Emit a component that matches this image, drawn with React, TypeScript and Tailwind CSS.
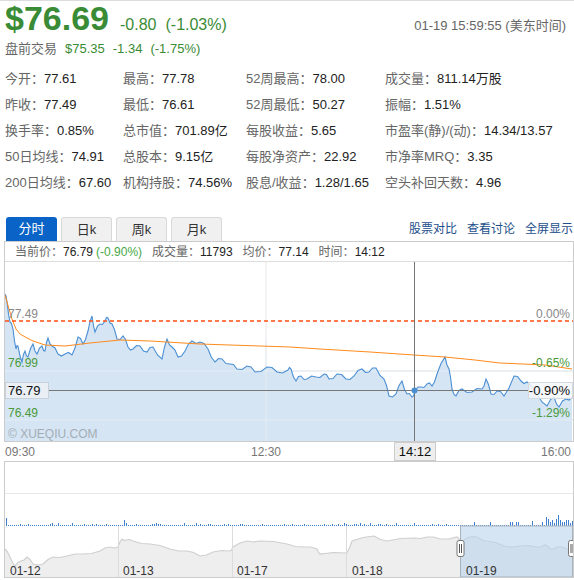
import React from 'react';

const STATS: [string, string][][] = [
  [['今开', '77.61'], ['最高', '77.78'], ['52周最高', '78.00'], ['成交量', '811.14万股']],
  [['昨收', '77.49'], ['最低', '76.61'], ['52周最低', '50.27'], ['振幅', '1.51%']],
  [['换手率', '0.85%'], ['总市值', '701.89亿'], ['每股收益', '5.65'], ['市盈率(静)/(动)', '14.34/13.57']],
  [['50日均线', '74.91'], ['总股本', '9.15亿'], ['每股净资产', '22.92'], ['市净率MRQ', '3.35']],
  [['200日均线', '67.60'], ['机构持股', '74.56%'], ['股息/收益', '1.28/1.65'], ['空头补回天数', '4.96']],
];

// traced from the intraday chart, page coordinates
const PRICE: [number, number][] = [
  [5, 295], [7, 303], [10, 323], [13, 330], [16, 350], [18, 347], [22, 363], [25, 352], [28, 358],
  [33, 345], [37, 355], [42, 347], [45, 352], [48, 339], [52, 347], [58, 355], [65, 355], [72, 356],
  [78, 338], [83, 345], [88, 332], [92, 317], [95, 333], [100, 325], [105, 322], [108, 319], [112, 325],
  [117, 340], [123, 337], [128, 348], [133, 350], [140, 347], [147, 353], [153, 348], [162, 360],
  [167, 340], [172, 348], [178, 358], [185, 352], [192, 342], [200, 343], [208, 350], [215, 363],
  [222, 360], [230, 365], [237, 370], [247, 367], [255, 373], [267, 368], [277, 373], [288, 371],
  [291, 370], [296, 382], [301, 377], [307, 380], [316, 378], [324, 375], [329, 380], [337, 375],
  [346, 380], [354, 377], [362, 370], [369, 373], [376, 369], [384, 380], [389, 397], [396, 395],
  [402, 382], [407, 395], [412, 398], [415, 392], [421, 388], [427, 385], [432, 387], [437, 375],
  [445, 358], [449, 370], [452, 390], [456, 397], [462, 390], [472, 393], [482, 390], [486, 380],
  [491, 395], [497, 392], [504, 397], [514, 377], [521, 382], [527, 383], [537, 395], [547, 407],
  [554, 398], [559, 408], [566, 400], [572, 398],
];

const AVG: [number, number][] = [
  [5, 296], [9, 310], [12, 320], [16, 330], [20, 335], [27, 339], [33, 342], [45, 346], [65, 347],
  [90, 344], [120, 341], [150, 342], [200, 345], [260, 347], [290, 348], [320, 350], [370, 353],
  [414, 356], [445, 358], [475, 361], [500, 364], [545, 366], [572, 370],
];

const NAV: [number, number][] = [
  [5, 550], [10, 558], [15, 567], [21, 562], [27, 558], [33, 565], [43, 565], [53, 558], [67, 557],
  [83, 555], [100, 552], [110, 548], [118, 548], [122, 540], [126, 541], [133, 542], [150, 545],
  [170, 550], [187, 552], [200, 557], [213, 553], [230, 552], [233, 548], [247, 542], [260, 542],
  [287, 545], [304, 548], [317, 550], [320, 555], [347, 554], [352, 542], [374, 537], [387, 542],
  [414, 539], [427, 538], [440, 540], [457, 538], [460, 542], [467, 539], [477, 538], [487, 542],
  [504, 547], [520, 547], [537, 548], [545, 546], [550, 550], [557, 548], [567, 550], [572, 547],
];

const jitter = (pts: [number, number][], amp: number) => {
  const out: [number, number][] = [];
  pts.forEach((p, i) => {
    out.push(p);
    const n = pts[i + 1];
    if (n) out.push([(p[0] + n[0]) / 2, (p[1] + n[1]) / 2 + (i % 2 ? amp : -amp)]);
  });
  return out;
};

const toLine = (pts: [number, number][]) => pts.map(([x, y]) => `${x},${y}`).join(' ');

const VOLUME = (() => {
  const bars: { x: number; h: number }[] = [];
  let seed = 7;
  for (let x = 6; x <= 572; x += 2) {
    seed = (seed * 9301 + 49297) % 233280;
    const r = seed / 233280;
    let h = r < 0.75 ? 1 : r < 0.95 ? 2 : 3;
    if (x > 545) h += Math.round(r * 7) + 1;
    else if (x > 470) h += r > 0.8 ? 2 : 0;
    bars.push({ x, h });
  }
  bars[0].h = 8;
  bars[59].h = 6;
  return bars;
})();

const PriceChart = () => {
  const line = jitter(PRICE, 2);
  return (
    <svg width={568} height={179} viewBox="5 263 568 179" className="block">
      <line x1={5} x2={573} y1={372} y2={372} stroke="#e4e4e4" />
      <line x1={5} x2={573} y1={421} y2={421} stroke="#e4e4e4" />
      <line x1={266} x2={266} y1={263} y2={442} stroke="#e8e8e8" />
      <polygon points={`5,442 ${toLine(line)} 572,442`} fill="#d5e5f3" />
      <line x1={5} x2={573} y1={372} y2={372} stroke="#e8eef5" opacity={0.8} />
      <line x1={5} x2={573} y1={421} y2={421} stroke="#e8eef5" opacity={0.8} />
      <line x1={266} x2={266} y1={340} y2={442} stroke="#e6edf4" />
      <polyline points={toLine(line)} fill="none" stroke="#4b8fd3" strokeWidth={1.1} />
      <polyline points={toLine(AVG)} fill="none" stroke="#ff8a1c" strokeWidth={1} />
      <line x1={5} x2={573} y1={322} y2={322} stroke="#ff4f10" strokeWidth={1.4} strokeDasharray="4 3" />
      <line x1={414.5} x2={414.5} y1={263} y2={442} stroke="#777" />
      <line x1={48} x2={528} y1={391.5} y2={391.5} stroke="#777" />
      <circle cx={414.5} cy={391.5} r={3} fill="#4b8fd3" />
      <g fontSize={12}>
        <text x={8} y={319} fill="#888">77.49</text>
        <text x={570} y={319} fill="#888" textAnchor="end">0.00%</text>
        <text x={8} y={368} fill="#4a9a3a">76.99</text>
        <text x={570} y={368} fill="#4a9a3a" textAnchor="end">-0.65%</text>
        <text x={8} y={418} fill="#4a9a3a">76.49</text>
        <text x={570} y={418} fill="#4a9a3a" textAnchor="end">-1.29%</text>
        <text x={8} y={439} fill="#a4adb6">© XUEQIU.COM</text>
      </g>
      <rect x={5.5} y={383.5} width={43} height={16} fill="#e9eff5" stroke="#c9d1d9" />
      <text x={8} y={396} fontSize={13} fill="#111">76.79</text>
      <rect x={528.5} y={383.5} width={44} height={16} fill="#f4f7fa" fillOpacity={0.85} stroke="#d4d9de" />
      <text x={570} y={396} fontSize={13} fill="#111" textAnchor="end">-0.90%</text>
    </svg>
  );
};

const TimeAxis = () => (
  <svg width={574} height={19} viewBox="0 443 574 19" className="block">
    <g fontSize={12} fill="#777">
      <text x={5} y={457}>09:30</text>
      <text x={266} y={457} textAnchor="middle">12:30</text>
      <text x={571} y={457} textAnchor="end">16:00</text>
    </g>
    <rect x={394.5} y={443.5} width={41} height={18} fill="#eee" stroke="#ccc" />
    <text x={415} y={457} fontSize={13} fill="#111" textAnchor="middle">14:12</text>
  </svg>
);

const Handle = ({ x }: { x: number }) => (
  <g>
    <rect x={x - 3.5} y={541.5} width={7} height={16} rx={2} fill="#fff" stroke="#777" />
    <line x1={x - 1} x2={x - 1} y1={545} y2={554} stroke="#555" />
    <line x1={x + 1} x2={x + 1} y1={545} y2={554} stroke="#555" />
  </g>
);

const Navigator = () => (
  <svg width={568} height={115} viewBox="5 463 568 115" className="block">
    <line x1={5} x2={573} y1={494.5} y2={494.5} stroke="#e8e8e8" />
    {VOLUME.map((b) => (
      <rect key={b.x} x={b.x} y={527 - b.h} width={1} height={b.h} fill="#3f80cf" />
    ))}
    <polygon points={`5,578 ${toLine(jitter(NAV, 1))} 572,578`} fill="#eeeeee" />
    <polyline points={toLine(jitter(NAV, 1))} fill="none" stroke="#cfcfcf" strokeWidth={1.2} />
    {[118.5, 232.5, 346.5].map((x) => (
      <line key={x} x1={x} x2={x} y1={527} y2={578} stroke="#dcdcdc" />
    ))}
    <rect x={460.5} y={527} width={112} height={51} fill="#b9d3ec" fillOpacity={0.6} stroke="#a9b3bd" />
    <Handle x={460.5} />
    <Handle x={572} />
    <g fontSize={12} fill="#333">
      <text x={10} y={576}>01-12</text>
      <text x={123} y={576}>01-13</text>
      <text x={237} y={576}>01-17</text>
      <text x={352} y={576}>01-18</text>
      <text x={466} y={576}>01-19</text>
    </g>
  </svg>
);

export default function App() {
  return (
    <div className="w-[574px] h-[580px] overflow-hidden bg-white border-t border-[#dcdcdc] font-['Liberation_Sans','Noto_Sans_CJK_SC',sans-serif] text-[#333]">
      {/* quote header */}
      <div className="flex items-baseline h-[34px] pl-[5px] pr-[8px]">
        <span className="text-[34px] leading-[34px] font-bold text-[#3a8b35]">$76.69</span>
        <span className="ml-[11px] text-[16px] text-[#3a8b35]">-0.80</span>
        <span className="ml-[9px] text-[16px] text-[#3a8b35]">(-1.03%)</span>
        <span className="ml-auto text-[13px] text-[#666]">01-19 15:59:55 (美东时间)</span>
      </div>
      <div className="flex items-center gap-[8px] h-[28px] pl-[5px] text-[13px] text-[#3a8b35]">
        <span className="text-[#666]">盘前交易</span>
        <span>$75.35</span>
        <span>-1.34</span>
        <span>(-1.75%)</span>
      </div>

      <div className="pt-[3px] pl-[5px] grid grid-cols-[118px_123px_139px_1fr] text-[13px]">
        {STATS.flat().map(([label, value]) => (
          <div key={label} className="h-[26px] flex items-center whitespace-nowrap">
            <span className="text-[#666]">{label}：</span>
            <span className="text-[#222]">{value}</span>
          </div>
        ))}
      </div>

      {/* tabs */}
      <div className="mt-[21px] flex items-center h-[24px] pl-[6px] pr-[1px]">
        <div className="flex items-end h-full gap-[4px] text-[13px]">
          <button className="w-[51px] h-[24px] rounded-t-[3px] bg-[#0a63c6] text-white">分时</button>
          {['日k', '周k', '月k'].map((t) => (
            <button key={t} className="w-[51px] h-[24px] rounded-t-[3px] bg-[#f0f0f0] border border-b-0 border-[#d9d9d9] text-[#333]">
              {t}
            </button>
          ))}
        </div>
        <div className="ml-auto flex gap-[10px] text-[12px] text-[#1e4f8c]">
          <span>股票对比</span>
          <span>查看讨论</span>
          <span>全屏显示</span>
        </div>
      </div>

      {/* intraday chart */}
      <div className="ml-[4px] w-[570px] border border-[#cccccc]">
        <div className="h-[20px] flex items-center pl-[10px] text-[12px] border-b border-[#dddddd] whitespace-nowrap">
          <span className="text-[#666]">当前价：</span>
          <span className="text-[#222]">76.79</span>
          <span className="ml-[3px] text-[#46a846]">(-0.90%)</span>
          <span className="ml-[10px] text-[#666]">成交量：</span>
          <span className="text-[#222]">11793</span>
          <span className="ml-[10px] text-[#666]">均价：</span>
          <span className="text-[#222]">77.14</span>
          <span className="ml-[10px] text-[#666]">时间：</span>
          <span className="text-[#222]">14:12</span>
        </div>
        <PriceChart />
      </div>
      <TimeAxis />
      <div className="ml-[4px] w-[570px] h-[117px] border border-[#cccccc]">
        <Navigator />
      </div>
    </div>
  );
}
